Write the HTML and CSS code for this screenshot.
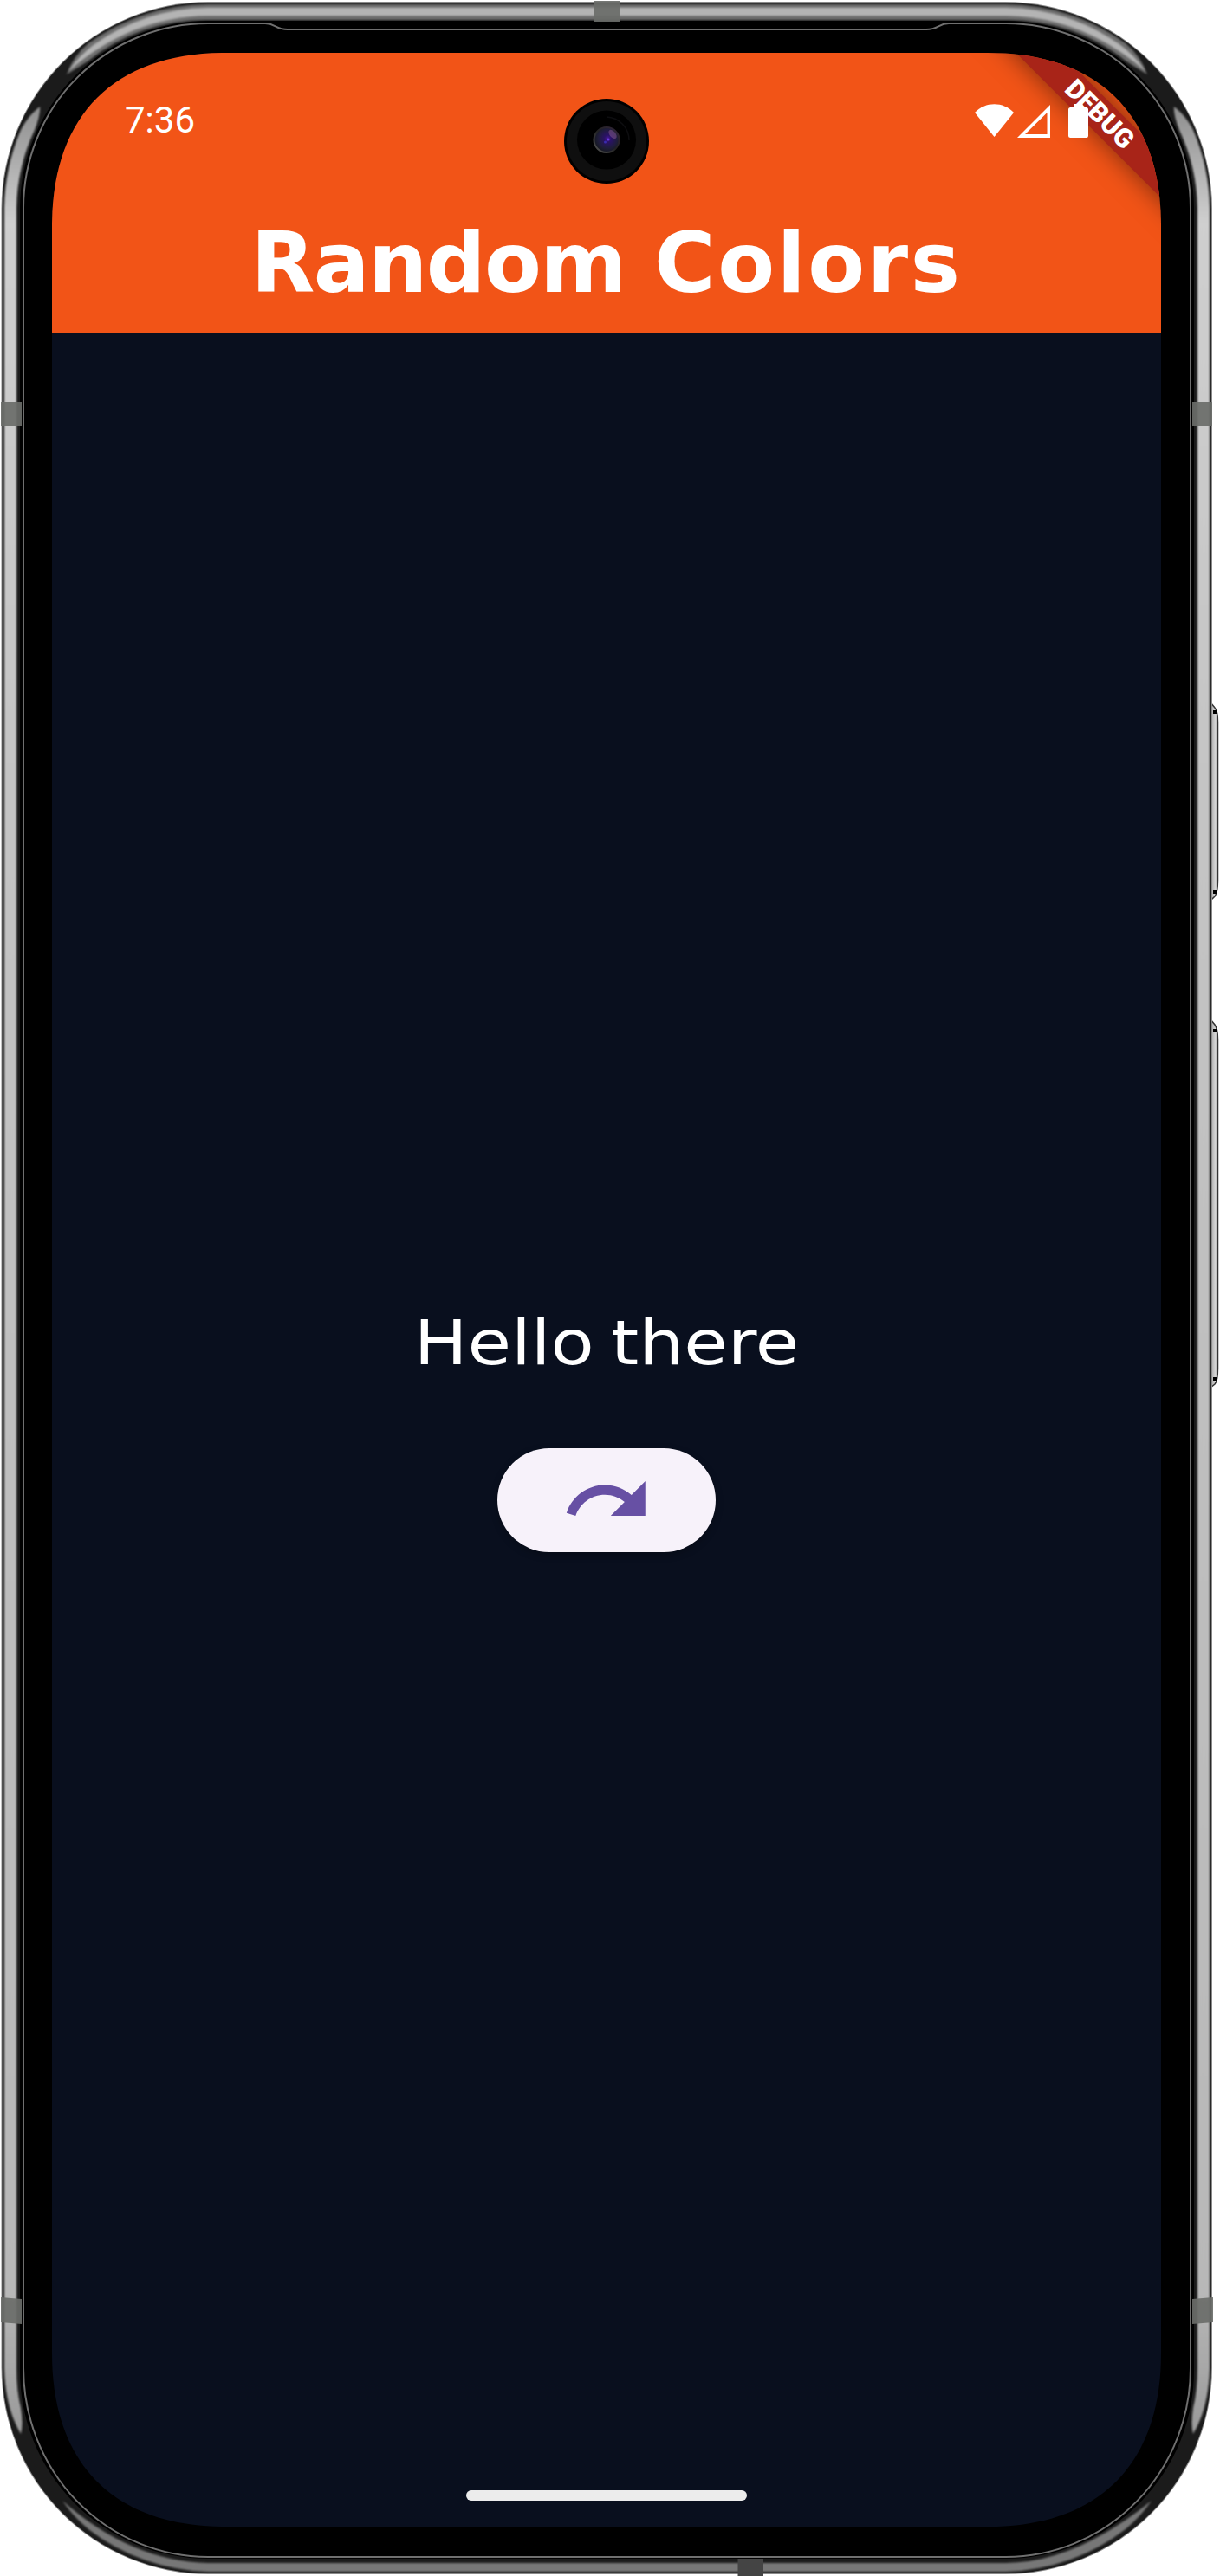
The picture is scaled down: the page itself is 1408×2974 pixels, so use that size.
FILE: index.html
```html
<!DOCTYPE html>
<html lang="en">
<head>
<meta charset="utf-8">
<title>Random Colors</title>
<link rel="stylesheet" href="styles.css">
</head>
<body>
<div class="phone">
  <svg class="frame" viewBox="0 0 1408 2974" aria-hidden="true">
    <defs>
      <linearGradient id="side" x1="0" y1="0" x2="0" y2="1">
        <stop offset="0" stop-color="#8f8f8f"/><stop offset=".05" stop-color="#cfcfcf"/>
        <stop offset=".3" stop-color="#c4c4c4"/><stop offset=".94" stop-color="#b8b8b8"/><stop offset="1" stop-color="#999"/>
      </linearGradient>
      <linearGradient id="key" x1="0" y1="0" x2="1" y2="0">
        <stop offset="0" stop-color="#555"/><stop offset=".3" stop-color="#bbb"/><stop offset=".7" stop-color="#d8d8d8"/><stop offset="1" stop-color="#777"/>
      </linearGradient>
      <filter id="soft" x="-1%" y="-1%" width="102%" height="102%"><feGaussianBlur stdDeviation=".9"/></filter>
      <filter id="softSide" x="-10%" y="-1%" width="120%" height="102%"><feGaussianBlur stdDeviation=".9"/></filter>
    </defs>
    <!-- side keys -->
    <g fill="url(#key)" stroke="#333" stroke-width="1.5">
      <path d="M1397 811L1402 817Q1405.500 821 1405.500 834V1016Q1405.500 1030 1402 1035L1397 1040Z"/>
      <path d="M1397 1177L1402 1183Q1405.500 1188 1405.500 1200V1580Q1405.500 1594 1402 1598L1397 1602Z"/>
    </g>
    <path d="M1400 822h4M1400 1030h5M1400 1190h4M1400 1592h5" stroke="#000" stroke-width="4"/>
    <!-- body -->
    <rect x="1.500" y="2" width="1397.500" height="2970" rx="239" fill="#8a8a8a"/>
    <rect x="2.500" y="3" width="1395.500" height="2968" rx="238" fill="#1b1b1b"/>
    <!-- polished rim -->
    <g filter="url(#soft)">
      <path fill="#6e6e6e" d="M77 86Q84 65 102 50A236 236 0 0 1 240 5H1161A236 236 0 0 1 1299 50Q1317 65 1324 86L1300 71A217 217 0 0 0 1161 23H240A217 217 0 0 0 101 71Z"/>
      <path fill="#b4b4b4" d="M79 82Q92 64 108 52A231 231 0 0 1 240 9H1161A231 231 0 0 1 1293 52Q1309 64 1322 82Q1250 19 1161 18H240Q151 19 79 82Z"/>
      <path fill="#777" d="M72 2887Q84 2905 102 2920A234 234 0 0 0 240 2969H1161A234 234 0 0 0 1299 2920Q1317 2905 1329 2887Q1240 2959 1161 2959H240Q151 2957 72 2887Z"/>
    </g>
    <g filter="url(#softSide)">
      <path fill="url(#side)" d="M46 123Q32 134 24 150A234 234 0 0 0 5 240V2734Q6 2780 24 2810Q27 2800 24 2780Q19 2760 19 2734V240A221 221 0 0 1 40 150Q47 132 46 123Z"/>
      <path fill="url(#side)" d="M1355 123Q1369 134 1377 150A234 234 0 0 1 1396 240V2734Q1395 2780 1377 2810Q1374 2800 1377 2780Q1382 2760 1382 2734V240A221 221 0 0 0 1361 150Q1354 132 1355 123Z"/>
    </g>
    <!-- glass edge -->
    <path fill="#000" d="M23 240A217 217 0 0 1 240 24H1161A217 217 0 0 1 1378 240V2734A217 217 0 0 1 1161 2954H240A217 217 0 0 1 23 2734Z"/>
    <path fill="none" stroke="#6f6f6f" stroke-width="2" d="M27 240A213 213 0 0 1 240 27H306C318 27 318 34 332 34H1069C1083 34 1083 27 1095 27H1161A213 213 0 0 1 1374 240V2734A213 218 0 0 1 1161 2952H240A213 218 0 0 1 27 2734Z"/>
    <!-- antenna bands -->
    <g fill="#6a6d69" fill-opacity=".92">
      <path d="M685.500 1h29.500v24h-29.500zM1 464h24v28H1zM1376 464h23v28h-23zM1 2652l24 2v29l-24-2zM1400 2652l-24 2v29l24-2z"/>
    </g>
    <path fill="#444" d="M851.500 2954h29.500v20h-29.500z"/>
  </svg>

  <main class="screen">
    <header class="app-bar">
      <div class="status-bar">
        <span class="clock">7:36</span>
        <svg class="status-icons" viewBox="0 0 132 42" aria-hidden="true">
          <path fill="#fff" d="M0 12C12-1 33-1 45 12L22.500 40Z"/>
          <path fill="#fff" fill-rule="evenodd" d="M49 41L87 3V41ZM58 37H83.500V12Z"/>
          <path fill="#fff" d="M114.500 2h10v4h4q2.500 0 2.500 2.500v30q0 2.500-2.500 2.500h-18q-2.500 0-2.500-2.500v-30Q108 6 110.500 6h4z"/>
        </svg>
      </div>
      <h1 class="title"><span class="title-first">Random</span> <span class="title-second">Colors</span></h1>
    </header>
    <section class="content">
      <p class="greeting">Hello there</p>
      <button class="next" type="button" aria-label="Next color">
        <svg class="next-icon" viewBox="0 0 24 24"><path fill="#6750a4" d="M18.400 10.600C16.550 8.990 14.150 8 11.500 8c-4.650 0-8.580 3.030-9.960 7.220L3.900 16c1.050-3.190 4.050-5.500 7.600-5.500 1.950 0 3.730.72 5.120 1.880L13 16h9V7z"/></svg>
      </button>
    </section>
    <div class="debug-banner">DEBUG</div>
    <svg class="camera" viewBox="0 0 98 98" aria-hidden="true">
      <defs>
        <radialGradient id="lens" cx=".55" cy=".45" r=".55">
          <stop offset="0" stop-color="#4a189c"/><stop offset=".25" stop-color="#2a1266"/><stop offset=".7" stop-color="#1f1d3a"/><stop offset="1" stop-color="#15181f"/>
        </radialGradient>
        <linearGradient id="lensRim" x1="0" y1="1" x2="1" y2="0"><stop offset="0" stop-color="#555"/><stop offset=".5" stop-color="#222"/><stop offset="1" stop-color="#33243a"/></linearGradient>
      </defs>
      <circle cx="49" cy="49" r="49" fill="#000"/>
      <circle cx="49" cy="49" r="46" fill="#0f0f0f"/>
      <circle cx="49" cy="47.500" r="34" fill="#000"/>
      <path d="M49 21A27 27 0 0 1 75 48" fill="none" stroke="#0d0d0f" stroke-width="1.500"/>
      <circle cx="49" cy="47.500" r="14.500" fill="url(#lens)" stroke="url(#lensRim)" stroke-width="2"/>
      <ellipse cx="56" cy="41" rx="3.500" ry="6" transform="rotate(-40 56 41)" fill="#8a5a94" fill-opacity=".5"/>
      <circle cx="51" cy="47" r="1.500" fill="#6a39de"/>
      <circle cx="47.500" cy="50" r="1.500" fill="#3a2bb0"/>
    </svg>
    <div class="home-handle"></div>
  </main>
</div>
</body>
</html>
```
FILE: styles.css
```css
* { box-sizing: border-box; }

body {
  margin: 0;
  background: #fff;
  font-family: Roboto, sans-serif;
}

.phone {
  position: relative;
  width: 1408px;
  height: 2974px;
  padding: 61px 68px 57px 60px;
  overflow: hidden;
}

.frame {
  position: absolute;
  inset: 0;
  width: 1408px;
  height: 2974px;
}

.screen {
  position: relative;
  display: flex;
  flex-direction: column;
  width: 1280px;
  height: 2856px;
  background: #090f1e;
  color: #fff;
  clip-path: path("M0 200C0 72 72 0 200 0H1080C1208 0 1280 72 1280 200V2656C1280 2784 1208 2856 1080 2856H200C72 2856 0 2784 0 2656Z");
}

.app-bar {
  height: 324px;
  background: #f25417;
}

.status-bar {
  display: flex;
  justify-content: space-between;
  align-items: center;
  height: 156px;
  padding: 0 83px 0 84px;
}

.clock {
  font-size: 42px;
  line-height: 48px;
}

.status-icons {
  position: relative;
  z-index: 2;
  width: 132px;
  height: 42px;
}

.title {
  margin: 0;
  font: bold 96px/174px "DejaVu Sans", sans-serif;
  text-align: center;
  white-space: nowrap;
}

.title-first { letter-spacing: -1.6px; }
.title-second { letter-spacing: 2.6px; }

.content {
  flex: 1;
  display: flex;
  flex-direction: column;
  align-items: center;
  padding-top: 1106px;
}

.greeting {
  margin: 0 0 63px;
  font: 72px/118px "DejaVu Sans", sans-serif;
  word-spacing: -6px;
  transform: scaleX(1.14);
}

.next {
  display: flex;
  align-items: center;
  justify-content: center;
  width: 252px;
  height: 120px;
  padding: 0;
  border: 0;
  border-radius: 60px;
  background: #f7f2fa;
  box-shadow: 0 3px 8px rgba(0, 0, 0, .25);
}

.next-icon {
  width: 106.67px;
  height: 106.67px;
}

.debug-banner {
  position: absolute;
  z-index: 1;
  left: 1009px;
  top: 53px;
  width: 400px;
  height: 36px;
  background: #a82418;
  box-shadow: 0 0 30px rgba(0, 0, 0, .5);
  font-size: 30.6px;
  font-weight: 900;
  line-height: 36px;
  text-align: center;
  transform: rotate(45deg);
}

.camera {
  position: absolute;
  left: 591px;
  top: 53px;
  width: 98px;
  height: 98px;
}

.home-handle {
  position: absolute;
  left: 478px;
  top: 2814px;
  width: 324px;
  height: 12px;
  border-radius: 6px;
  background: #ececec;
}
```
